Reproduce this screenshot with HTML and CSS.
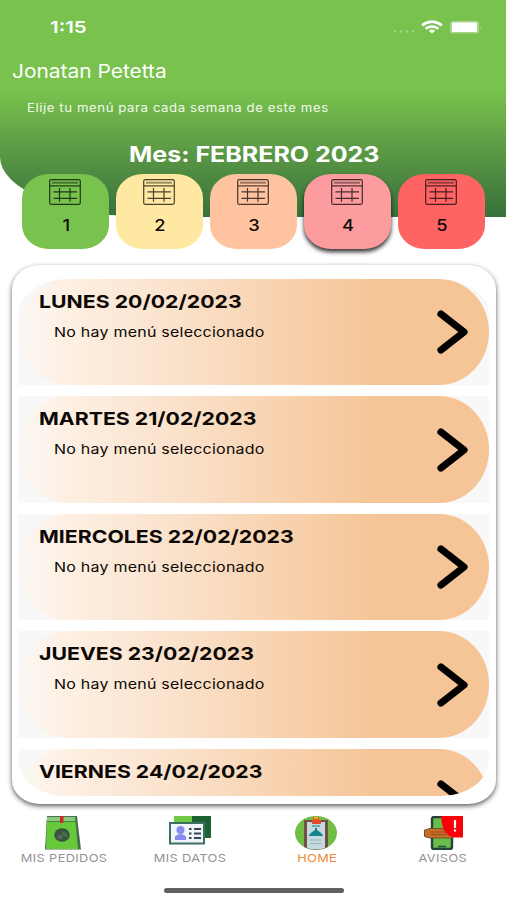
FILE: index.html
```html
<!DOCTYPE html>
<html lang="es">
<head>
<meta charset="utf-8">
<title>Menú semanal</title>
<link rel="stylesheet" href="styles.css">
</head>
<body>
<svg class="defs" aria-hidden="true">
  <symbol id="cal" viewBox="0 0 32 26">
    <g fill="none" stroke="#000" stroke-opacity=".72" stroke-width="1.2">
      <rect x=".7" y=".7" width="30.6" height="24.6" rx="1.5"/>
      <path d="M1 6.900H31"/><path d="M3 3.700H29" stroke-opacity=".4" stroke-width="2"/>
      <path d="M4.500 12.800H28M4.500 19.300H28M10.500 9V22.700M21 9V22.700"/>
    </g>
  </symbol>
  <symbol id="chev" viewBox="0 0 32 44">
    <path d="M4 4L27 22L4 40" fill="none" stroke="#000" stroke-width="7.200" stroke-linecap="round" stroke-linejoin="round"/>
  </symbol>
</svg>
<main class="screen">
  <header class="header">
    <div class="status">
      <span class="time">1:15</span>
      <svg class="status-icons" viewBox="0 0 92 16">
        <g fill="#fff" fill-opacity=".3"><circle cx="4" cy="11.500" r="1.300"/><circle cx="10" cy="11.500" r="1.300"/><circle cx="16" cy="11.500" r="1.300"/><circle cx="22" cy="11.500" r="1.300"/></g>
        <g fill="none" stroke="#fff" stroke-width="2.600"><path d="M31 5.400Q41 -2.200 51 5.400"/><path d="M34.600 8.800Q41 3.800 47.400 8.800"/></g>
        <path d="M41 13.500L37.800 10.700Q41 8.300 44.200 10.700Z" fill="#fff"/>
        <rect x="59" y="1" width="29" height="12.500" rx="2.500" fill="#fff" fill-opacity=".35"/>
        <rect x="61" y="2.500" width="25" height="9.500" rx=".8" fill="#fff"/>
        <path d="M89.500 6Q91.500 7.500 89.500 9Z" fill="#fff" fill-opacity=".5"/>
      </svg>
    </div>
    <div class="name">Jonatan Petetta</div>
    <div class="hint">Elije tu menú para cada semana de este mes</div>
    <h1 class="month">Mes: FEBRERO 2023</h1>
  </header>
  <nav class="weeks">
    <div class="week w1"><svg><use href="#cal"/></svg><span>1</span></div>
    <div class="week w2"><svg><use href="#cal"/></svg><span>2</span></div>
    <div class="week w3"><svg><use href="#cal"/></svg><span>3</span></div>
    <div class="week w4"><svg><use href="#cal"/></svg><span>4</span></div>
    <div class="week w5"><svg><use href="#cal"/></svg><span>5</span></div>
  </nav>
  <section class="panel">
    <div class="list">
      <article class="day"><div class="card"><div><h2>LUNES 20/02/2023</h2><p>No hay menú seleccionado</p></div><svg><use href="#chev"/></svg></div></article>
      <article class="day"><div class="card"><div><h2>MARTES 21/02/2023</h2><p>No hay menú seleccionado</p></div><svg><use href="#chev"/></svg></div></article>
      <article class="day"><div class="card"><div><h2>MIERCOLES 22/02/2023</h2><p>No hay menú seleccionado</p></div><svg><use href="#chev"/></svg></div></article>
      <article class="day"><div class="card"><div><h2>JUEVES 23/02/2023</h2><p>No hay menú seleccionado</p></div><svg><use href="#chev"/></svg></div></article>
      <article class="day"><div class="card"><div><h2>VIERNES 24/02/2023</h2><p>No hay menú seleccionado</p></div><svg><use href="#chev"/></svg></div></article>
    </div>
  </section>
  <nav class="tabs">
    <div class="tab">
      <svg viewBox="0 0 42 34">
        <path d="M5 0H35L39 33.500H3Z" fill="#48704a"/>
        <path d="M5 1H33L36 33H4Z" fill="#68c83c"/>
        <path d="M5 1H33V5H5Z" fill="#8bc982"/><path d="M4.500 5.500H34" stroke="#478335"/>
        <path d="M18 0H21.500V7H18Z" fill="#c62c24"/>
        <ellipse cx="20" cy="19" rx="7.800" ry="6.700" fill="#375440"/>
        <path d="M19 15Q25 15 26 21L21 20Z" fill="#4a6e49"/><circle cx="18" cy="21" r="2.500" fill="#59645f"/>
      </svg>
      <span>MIS PEDIDOS</span>
    </div>
    <div class="tab">
      <svg viewBox="0 0 42 34">
        <path d="M5 0H24V9H5Z" fill="#70c944"/><path d="M23 0H42V22H23Z" fill="#1d6332"/>
        <rect x="1" y="7" width="34" height="20.500" fill="#f2f5fa" stroke="#3f6e65" stroke-width="2"/>
        <ellipse cx="11.500" cy="14" rx="4" ry="4" fill="#858bf0"/><path d="M6 24V20.500Q8 18 11.500 18Q15 18 17 20.500V24Z" fill="#858bf0"/>
        <path d="M20 13H22.500M25 13H32M20 17.500H22.500M25 17.500H32M20 22H22.500M25 22H32" stroke="#354650" stroke-width="1.900"/>
      </svg>
      <span>MIS DATOS</span>
    </div>
    <div class="tab active">
      <svg viewBox="0 0 42 34">
        <ellipse cx="21" cy="17" rx="21" ry="17" fill="#70be45"/>
        <path d="M9 4H33V31Q21 37 9 31Z" fill="#715141"/>
        <path d="M12 6H30V32Q21 35 12 32Z" fill="#c3d9df"/>
        <path d="M13.500 20Q15 17 20 14V12H22V14Q27 17 28 20Z" fill="#17828c"/><path d="M17 10H25" stroke="#4a9b9c" stroke-width="1.500"/>
        <path d="M15 24H26M15 27.500H26" stroke="#96b8bd"/>
        <path d="M18 1H24V4H26V8H17V4H18Z" fill="#e94b28"/><path d="M19 1H23V3H19Z" fill="#ffa138"/>
      </svg>
      <span>HOME</span>
    </div>
    <div class="tab">
      <svg viewBox="0 0 42 34">
        <rect x="10" y="1" width="20" height="32" rx="2" fill="#69bd4b" stroke="#25413e" stroke-width="2.400"/>
        <path d="M16 30.500H24" stroke="#264f3b" stroke-width="1.500"/>
        <path d="M8 12.500H31V22H8L2.500 20.500V14Z" fill="#c56c29" stroke="#76512e" stroke-width="1"/>
        <path d="M9 16H25M9 18.500H25" stroke="#944c1d" stroke-width=".8"/>
        <path d="M19 0H41V21.500H32Q22 19 20 8Z" fill="#fb0008"/>
        <path d="M33 4V12M33 13.500V15.500" stroke="#fff" stroke-width="2.200"/>
      </svg>
      <span>AVISOS</span>
    </div>
  </nav>
  <div class="home-bar"></div>
</main>
</body>
</html>
```
FILE: styles.css
```css
* { box-sizing: border-box; margin: 0; padding: 0; }
body { width: 507px; height: 900px; overflow: hidden; background: #fff; font-family: Inter, "Liberation Sans", sans-serif; color: #0c0805; }
.defs { display: none; }
.screen { width: 506px; height: 900px; display: flex; flex-direction: column; }
.header {
  height: 217px; color: #fff; flex: none; display: flex; flex-direction: column; align-items: flex-start;
  background: linear-gradient(#78c24d 0 92px, #66a648 130px, #38703b 217px);
  border-bottom-left-radius: 150px 60px;
}
.header div, .header h1 { white-space: nowrap; flex: none; }
.status { width: 100%; height: 56px; padding: 17px 23px 0 50px; display: flex; justify-content: space-between; }
.time { font-size: 16.5px; line-height: 21px; font-weight: 600; transform: scaleX(1.24); transform-origin: left; }
.status-icons { width: 92px; height: 16px; margin-top: 3px; }
.name { font-size: 18.5px; line-height: 28px; margin: 1px 0 0 12px; transform: scaleX(1.13); transform-origin: left; }
.hint { font-size: 11.5px; line-height: 16px; margin: 15px 0 0 27px; transform: scaleX(1.147); transform-origin: left; letter-spacing: .5px; color: #f0fae9; }
.month { font-size: 21px; line-height: 28px; margin: 25px 0 0 129px; transform: scaleX(1.19); transform-origin: left; font-weight: 700; }
.weeks { display: flex; gap: 6.5px; margin: -43px 0 0 21.5px; flex: none; }
.week { width: 87.5px; height: 74.5px; border-radius: 27px / 24px; display: flex; flex-direction: column; align-items: center; padding-top: 5px; }
.week svg { width: 32px; height: 26px; }
.week span { font-size: 15.5px; line-height: 20px; margin: 11px 0 0 1px; font-weight: 450; transform: scaleX(1.18); }
.w1 { background: #78c24d; }
.w2 { background: #ffe9a2; }
.w3 { background: #ffc49f; }
.w4 { background: #fc9c9f; box-shadow: 0 3px 4px rgba(0,0,0,.8); }
.w5 { background: #ff6464; }
.panel { flex: none; width: 484.5px; height: 539px; margin: 16.5px 0 0 11.5px; padding: 13.5px 7px 8.5px 6.5px; border-radius: 28px / 24px; background: #fff; box-shadow: 0 2px 5px rgba(0,0,0,.65); }
.list { height: 517px; overflow: hidden; border-radius: 48px / 36px; display: flex; flex-direction: column; gap: 11px; }
.day { flex: none; height: 106.5px; background: #f8f8f8; }
.card { height: 106.5px; border-radius: 50px / 53px; padding: 12px 20px 0 21px; display: flex; justify-content: space-between; background: linear-gradient(90deg, #fbf8f5, #fdf0e3 10%, #fae2cc 33%, #f8d3b0 55%, #f5c597 76%); }
.card h2 { font-size: 18px; line-height: 22px; font-weight: 700; white-space: nowrap; transform: scaleX(1.182); transform-origin: left; }
.card p { width: fit-content; font-size: 13.5px; line-height: 18px; margin: 10px 0 0 15px; white-space: nowrap; transform: scaleX(1.184); transform-origin: left; letter-spacing: .2px; }
.card svg { width: 32px; height: 44px; margin-top: 19.5px; }
.tabs { display: grid; grid-template-columns: repeat(4, 126.5px); margin-top: 11.5px; flex: none; }
.tab { display: flex; flex-direction: column; align-items: center; color: #939393; }
.tab svg { width: 42px; height: 34px; }
.tab span { font-size: 11px; line-height: 14px; margin: 1px 0 0 1px; transform: scaleX(1.165); white-space: nowrap; letter-spacing: .3px; }
.active { color: #ef8a36; }
.home-bar { width: 180px; height: 5px; margin: 23px 0 0 163.5px; border-radius: 3px; background: #616161; flex: none; }
```
